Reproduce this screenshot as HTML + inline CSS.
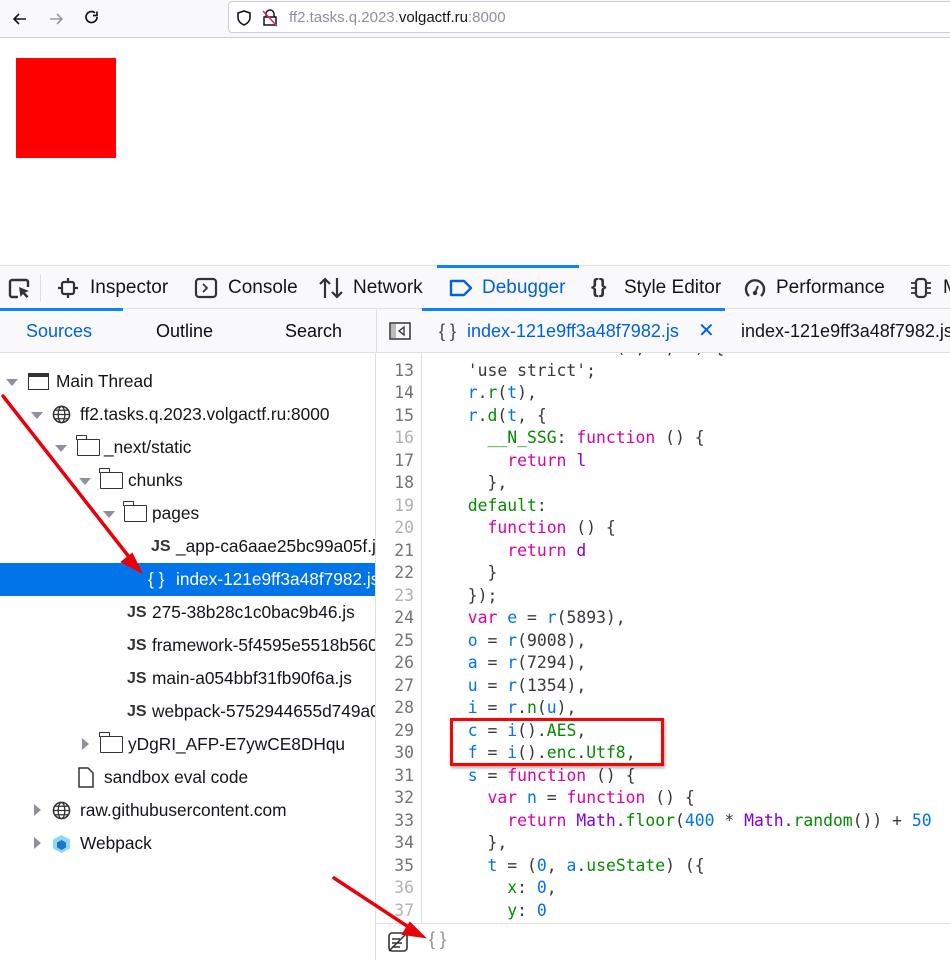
<!DOCTYPE html>
<html><head><meta charset="utf-8"><style>
*{box-sizing:border-box;margin:0;padding:0}
body{width:950px;height:960px;overflow:hidden;background:#fff;font-family:"Liberation Sans","DejaVu Sans",sans-serif;position:relative;color:#0c0c0d}
.abs{position:absolute}
#nav{left:0;top:0;width:950px;height:38px;background:#f9f9fb;border-bottom:1px solid #cfcfd8}
#url{left:228px;top:1px;width:740px;height:32px;background:#fff;border:1px solid #cfcfd8;border-radius:4px;font-size:15px;line-height:31px;padding-left:60px;color:#8f8f9d}
#url b{font-weight:normal;color:#15141a}
#dt{left:0;top:265px;width:950px;height:44px;background:#f9f9fb;border-top:1px solid #e0e0e2;border-bottom:1px solid #e0e0e2}
.t{position:absolute;top:0;height:43px;line-height:43px;font-size:19px;color:#15141a;white-space:nowrap}
#sub{left:0;top:309px;width:950px;height:44px;background:#f9f9fb;border-bottom:1px solid #e0e0e2}
.s{position:absolute;top:0;line-height:44px;font-size:18px;white-space:nowrap}
#lp{left:0;top:353px;width:376px;height:607px;border-right:1px solid #e0e0e2;background:#fff;overflow:hidden}
.r{position:absolute;left:0;width:375px;height:33px;line-height:33px;font-size:17.3px;white-space:nowrap;color:#15141a;overflow:hidden}
.tri{position:absolute;top:14px;width:0;height:0;border-left:6px solid transparent;border-right:6px solid transparent;border-top:7px solid #8f8f9d}
.trr{position:absolute;top:10px;width:0;height:0;border-top:6px solid transparent;border-bottom:6px solid transparent;border-left:7px solid #8f8f9d}
.fold{position:absolute;top:8px;width:23px;height:17px;border:1.7px solid #333;border-radius:1px}
.fold:before{content:"";position:absolute;left:-2px;top:-5px;width:9px;height:4px;border:1.7px solid #333;border-bottom:none;border-radius:1px 1px 0 0}
.js{position:absolute;font-weight:bold;font-size:16px;color:#333}
#code{left:377px;top:353px;width:573px;height:570px;overflow:hidden;font-family:"DejaVu Sans Mono",monospace;font-size:16.4px}
.l{position:absolute;left:0;height:22.5px;line-height:22.5px;white-space:pre;width:573px}
.n{position:absolute;right:536px;color:#737373;text-align:right}
.n.g{color:#b1b1b3}
.c{position:absolute;left:71px;color:#38383d}
.v{color:#0074e8}.k{color:#dd00a9}.p{color:#058b00}.m{color:#8000d7}
#gut{left:421px;top:353px;width:1px;height:570px;background:#e0e0e2}
#bot{left:377px;top:923px;width:573px;height:37px;border-top:1px solid #e0e0e2;background:#fff}
</style></head><body>
<div id="nav" class="abs">
<svg class="abs" style="left:10px;top:9px" width="20" height="20" viewBox="0 0 20 20"><path d="M16 10H4M9 5L4 10l5 5" fill="none" stroke="#15141a" stroke-width="1.6"/></svg>
<svg class="abs" style="left:46px;top:9px" width="20" height="20" viewBox="0 0 20 20"><path d="M4 10h12M11 5l5 5-5 5" fill="none" stroke="#9a9aa3" stroke-width="1.6"/></svg>
<svg class="abs" style="left:82px;top:8px" width="20" height="20" viewBox="0 0 20 20"><path d="M15 9a5.5 5.5 0 1 1-2-4.2M15 3.5v4h-4" fill="none" stroke="#15141a" stroke-width="1.7"/></svg>
</div>
<div id="url" class="abs">ff2.tasks.q.2023.<b>volgactf.ru</b>:8000
<svg class="abs" style="left:6px;top:7px" width="18" height="18" viewBox="0 0 18 18"><path d="M9 2L3 4v4.5c0 3.5 2.6 6 6 7.5 3.4-1.5 6-4 6-7.5V4z" fill="none" stroke="#15141a" stroke-width="1.6"/></svg>
<svg class="abs" style="left:32px;top:6px" width="18" height="20" viewBox="0 0 18 20"><path d="M5 9V6a4 4 0 0 1 8 0v3M3 9h12v8H3z" fill="none" stroke="#15141a" stroke-width="1.5"/><path d="M2 3l14 15" stroke="#e22850" stroke-width="1.6"/></svg>
</div>
<div class="abs" style="left:16px;top:58px;width:100px;height:100px;background:#f00"></div>

<div id="dt" class="abs">
<div class="abs" style="left:437px;top:-1px;width:142px;height:3px;background:#0a84ff"></div>
<svg class="abs" style="left:8px;top:11px" width="24" height="24" viewBox="0 0 24 24"><path d="M10 20H4a2 2 0 0 1-2-2V5a2 2 0 0 1 2-2h14a2 2 0 0 1 2 2v5" fill="none" stroke="#333" stroke-width="2.4"/><path d="M11 10l10 4-4 1.5 3.5 4-2 1.5-3.5-4-2.5 3z" fill="#333"/></svg>
<div class="abs" style="left:40px;top:8px;width:1px;height:28px;background:#e0e0e2"></div>
<svg class="abs" style="left:57px;top:11px" width="22" height="22" viewBox="0 0 22 22"><rect x="5" y="5" width="12" height="12" rx="2" fill="none" stroke="#333" stroke-width="2.2"/><path d="M11 1v4M11 17v4M1 11h4M17 11h4" stroke="#333" stroke-width="2.2"/></svg>
<div class="t" style="left:90px">Inspector</div>
<svg class="abs" style="left:194px;top:11px" width="24" height="22" viewBox="0 0 24 22"><rect x="2" y="2" width="20" height="18" rx="3" fill="none" stroke="#333" stroke-width="2.2"/><path d="M9 7l4 4-4 4" fill="none" stroke="#333" stroke-width="1.8"/></svg>
<div class="t" style="left:228px">Console</div>
<svg class="abs" style="left:318px;top:10px" width="26" height="24" viewBox="0 0 26 24"><path d="M7 22V3M2 8l5-5 5 5M19 2v19M14 16l5 5 5-5" fill="none" stroke="#333" stroke-width="2.2"/></svg>
<div class="t" style="left:353px">Network</div>
<svg class="abs" style="left:448px;top:12px" width="26" height="20" viewBox="0 0 26 20"><path d="M3 3h13l7 7-7 7H3z" fill="none" stroke="#0061e0" stroke-width="2.4" stroke-linejoin="round"/></svg>
<div class="t" style="left:482px;color:#0061e0">Debugger</div>
<div class="t" style="left:591px;font-weight:bold;font-size:20px;color:#333">{}</div>
<div class="t" style="left:624px">Style Editor</div>
<svg class="abs" style="left:743px;top:10px" width="24" height="24" viewBox="0 0 24 24"><path d="M6 20A9 9 0 1 1 18 20" fill="none" stroke="#333" stroke-width="2.4"/><path d="M12 17l3-7" stroke="#333" stroke-width="2"/><circle cx="12" cy="17" r="2.2" fill="#333"/></svg>
<div class="t" style="left:776px">Performance</div>
<svg class="abs" style="left:909px;top:10px" width="24" height="24" viewBox="0 0 24 24"><rect x="7" y="3" width="10" height="18" rx="3" fill="none" stroke="#333" stroke-width="2.2"/><path d="M2 7h5M2 12h5M2 17h5M17 7h5M17 12h5M17 17h5" stroke="#333" stroke-width="1.8"/></svg>
<div class="t" style="left:943px">M</div>
</div>

<div id="sub" class="abs">
<div class="abs" style="left:0;top:-1px;width:123px;height:3px;background:#0a84ff"></div>
<div class="abs" style="left:422px;top:-1px;width:303px;height:3px;background:#0a84ff"></div>
<div class="s" style="left:26px;color:#0061e0">Sources</div>
<div class="s" style="left:156px">Outline</div>
<div class="s" style="left:285px">Search</div>
<div class="abs" style="left:376px;top:0;width:1px;height:44px;background:#e0e0e2"></div>
<svg class="abs" style="left:389px;top:13px" width="22" height="18" viewBox="0 0 22 18"><rect x="1" y="1" width="20" height="16" fill="none" stroke="#333" stroke-width="1.5"/><rect x="2" y="2" width="5" height="14" fill="#bbb"/><path d="M15 5v8l-5-4z" fill="none" stroke="#333" stroke-width="1.3"/></svg>
<div class="s" style="left:439px;color:#444">{ }</div>
<div class="s" style="left:467px;color:#0061e0">index-121e9ff3a48f7982.js</div>
<div class="s" style="left:698px;color:#0061e0;font-size:20px">✕</div>
<div class="s" style="left:741px;color:#15141a">index-121e9ff3a48f7982.js</div>
</div>

<div id="lp" class="abs">
<div class="r" style="top:12px"><div class="tri" style="left:6px"></div><div class="abs" style="left:28px;top:8px;width:21px;height:17px;border:1.7px solid #333;border-top-width:4px"></div><span class="abs" style="left:56px">Main Thread</span></div>
<div class="r" style="top:45px"><div class="tri" style="left:31px"></div><svg class="abs" style="left:52px;top:7px" width="19" height="19" viewBox="0 0 20 20"><circle cx="10" cy="10" r="8.5" fill="none" stroke="#333" stroke-width="1.6"/><ellipse cx="10" cy="10" rx="3.5" ry="8.5" fill="none" stroke="#333" stroke-width="1.4"/><path d="M1.5 10h17M3 5.5h14M3 14.5h14" stroke="#333" stroke-width="1.3"/></svg><span class="abs" style="left:80px">ff2.tasks.q.2023.volgactf.ru:8000</span></div>
<div class="r" style="top:78px"><div class="tri" style="left:55px"></div><div class="fold" style="left:77px"></div><span class="abs" style="left:104px">_next/static</span></div>
<div class="r" style="top:111px"><div class="tri" style="left:79px"></div><div class="fold" style="left:100px"></div><span class="abs" style="left:128px">chunks</span></div>
<div class="r" style="top:144px"><div class="tri" style="left:103px"></div><div class="fold" style="left:124px"></div><span class="abs" style="left:152px">pages</span></div>
<div class="r" style="top:177px"><span class="js" style="left:151px">JS</span><span class="abs" style="left:176px">_app-ca6aae25bc99a05f.js</span></div>
<div class="r" style="top:210px;background:#0074e8;color:#fff"><span class="abs" style="left:148px">{ }</span><span class="abs" style="left:176px">index-121e9ff3a48f7982.js</span></div>
<div class="r" style="top:243px"><span class="js" style="left:127px">JS</span><span class="abs" style="left:152px">275-38b28c1c0bac9b46.js</span></div>
<div class="r" style="top:276px"><span class="js" style="left:127px">JS</span><span class="abs" style="left:152px">framework-5f4595e5518b560d.js</span></div>
<div class="r" style="top:309px"><span class="js" style="left:127px">JS</span><span class="abs" style="left:152px">main-a054bbf31fb90f6a.js</span></div>
<div class="r" style="top:342px"><span class="js" style="left:127px">JS</span><span class="abs" style="left:152px">webpack-5752944655d749a0.js</span></div>
<div class="r" style="top:375px"><div class="trr" style="left:82px"></div><div class="fold" style="left:100px"></div><span class="abs" style="left:128px">yDgRI_AFP-E7ywCE8DHqu</span></div>
<div class="r" style="top:408px"><svg class="abs" style="left:78px;top:6px" width="16" height="21" viewBox="0 0 16 21"><path d="M1 1h9l5 5v14H1z" fill="none" stroke="#333" stroke-width="1.5"/></svg><span class="abs" style="left:104px">sandbox eval code</span></div>
<div class="r" style="top:441px"><div class="trr" style="left:34px"></div><svg class="abs" style="left:52px;top:7px" width="19" height="19" viewBox="0 0 20 20"><circle cx="10" cy="10" r="8.5" fill="none" stroke="#333" stroke-width="1.6"/><ellipse cx="10" cy="10" rx="3.5" ry="8.5" fill="none" stroke="#333" stroke-width="1.4"/><path d="M1.5 10h17M3 5.5h14M3 14.5h14" stroke="#333" stroke-width="1.3"/></svg><span class="abs" style="left:80px">raw.githubusercontent.com</span></div>
<div class="r" style="top:474px"><div class="trr" style="left:34px"></div><svg class="abs" style="left:52px;top:7px" width="19" height="20" viewBox="0 0 19 20"><path d="M9.5 1L18 5.5v9L9.5 19 1 14.5v-9z" fill="#8ed6fb"/><path d="M9.5 6l4.5 2.5v5L9.5 16 5 13.5v-5z" fill="#1c78c0"/></svg><span class="abs" style="left:80px">Webpack</span></div>
</div>

<div id="code" class="abs">
<div class="l" style="top:-16px"><span class="n g">12</span><span class="c">  <span class="p">const</span> <span class="k">function</span> (<span class="v">n</span>, <span class="v">t</span>, <span class="v">r</span>) {</span></div>
<div class="l" style="top:6.5px"><span class="n">13</span><span class="c">  'use strict';</span></div>
<div class="l" style="top:29px"><span class="n">14</span><span class="c">  <span class="v">r</span>.<span class="p">r</span>(<span class="v">t</span>),</span></div>
<div class="l" style="top:51.5px"><span class="n">15</span><span class="c">  <span class="v">r</span>.<span class="p">d</span>(<span class="v">t</span>, {</span></div>
<div class="l" style="top:74px"><span class="n g">16</span><span class="c">    <span class="p">__N_SSG</span>: <span class="k">function</span> () {</span></div>
<div class="l" style="top:96.5px"><span class="n">17</span><span class="c">      <span class="k">return</span> <span class="m">l</span></span></div>
<div class="l" style="top:119px"><span class="n">18</span><span class="c">    },</span></div>
<div class="l" style="top:141.5px"><span class="n g">19</span><span class="c">  <span class="p">default</span>:</span></div>
<div class="l" style="top:164px"><span class="n g">20</span><span class="c">    <span class="k">function</span> () {</span></div>
<div class="l" style="top:186.5px"><span class="n">21</span><span class="c">      <span class="k">return</span> <span class="m">d</span></span></div>
<div class="l" style="top:209px"><span class="n">22</span><span class="c">    }</span></div>
<div class="l" style="top:231.5px"><span class="n g">23</span><span class="c">  });</span></div>
<div class="l" style="top:254px"><span class="n">24</span><span class="c">  <span class="k">var</span> <span class="v">e</span> = <span class="v">r</span>(5893),</span></div>
<div class="l" style="top:276.5px"><span class="n">25</span><span class="c">  <span class="v">o</span> = <span class="v">r</span>(9008),</span></div>
<div class="l" style="top:299px"><span class="n">26</span><span class="c">  <span class="v">a</span> = <span class="v">r</span>(7294),</span></div>
<div class="l" style="top:321.5px"><span class="n">27</span><span class="c">  <span class="v">u</span> = <span class="v">r</span>(1354),</span></div>
<div class="l" style="top:344px"><span class="n">28</span><span class="c">  <span class="v">i</span> = <span class="v">r</span>.<span class="p">n</span>(<span class="v">u</span>),</span></div>
<div class="l" style="top:366.5px"><span class="n">29</span><span class="c">  <span class="v">c</span> = <span class="v">i</span>().<span class="p">AES</span>,</span></div>
<div class="l" style="top:389px"><span class="n">30</span><span class="c">  <span class="v">f</span> = <span class="v">i</span>().<span class="p">enc</span>.<span class="p">Utf8</span>,</span></div>
<div class="l" style="top:411.5px"><span class="n">31</span><span class="c">  <span class="v">s</span> = <span class="k">function</span> () {</span></div>
<div class="l" style="top:434px"><span class="n">32</span><span class="c">    <span class="k">var</span> <span class="v">n</span> = <span class="k">function</span> () {</span></div>
<div class="l" style="top:456.5px"><span class="n">33</span><span class="c">      <span class="k">return</span> <span class="m">Math</span>.<span class="p">floor</span>(<span class="v">400</span> * <span class="m">Math</span>.<span class="p">random</span>()) + <span class="v">50</span></span></div>
<div class="l" style="top:479px"><span class="n">34</span><span class="c">    },</span></div>
<div class="l" style="top:501.5px"><span class="n">35</span><span class="c">    <span class="v">t</span> = (<span class="v">0</span>, <span class="v">a</span>.<span class="p">useState</span>) ({</span></div>
<div class="l" style="top:524px"><span class="n g">36</span><span class="c">      <span class="p">x</span>: <span class="v">0</span>,</span></div>
<div class="l" style="top:546.5px"><span class="n g">37</span><span class="c">      <span class="p">y</span>: <span class="v">0</span></span></div>
</div>
<div id="gut" class="abs"></div>
<div id="bot" class="abs">
<svg class="abs" style="left:10px;top:7px" width="22" height="22" viewBox="0 0 22 22"><rect x="2" y="2" width="18" height="18" rx="3" fill="none" stroke="#333" stroke-width="1.6"/><path d="M5 8h8M5 12h10M5 16h8M2 20L20 2" stroke="#333" stroke-width="1.5"/></svg>
<div class="abs" style="left:52px;top:5px;font-size:18px;color:#8f8f9d">{ }</div>
</div>

<div class="abs" style="left:450px;top:718px;width:214px;height:48px;border:3.5px solid #f00;box-shadow:1px 2px 3px rgba(0,0,0,.35)"></div>
<svg class="abs" style="left:0;top:0" width="950" height="960" viewBox="0 0 950 960">
<g stroke="#e8000b" stroke-width="3.5" fill="#e8000b" stroke-linecap="round">
<line x1="3" y1="396" x2="133" y2="562"/>
<path d="M141 572L122 562L132 554z" stroke-width="2"/>
<line x1="334" y1="878" x2="410" y2="928"/>
<path d="M424 937L403 934L410 923z" stroke-width="2"/>
</g></svg>
</body></html>
